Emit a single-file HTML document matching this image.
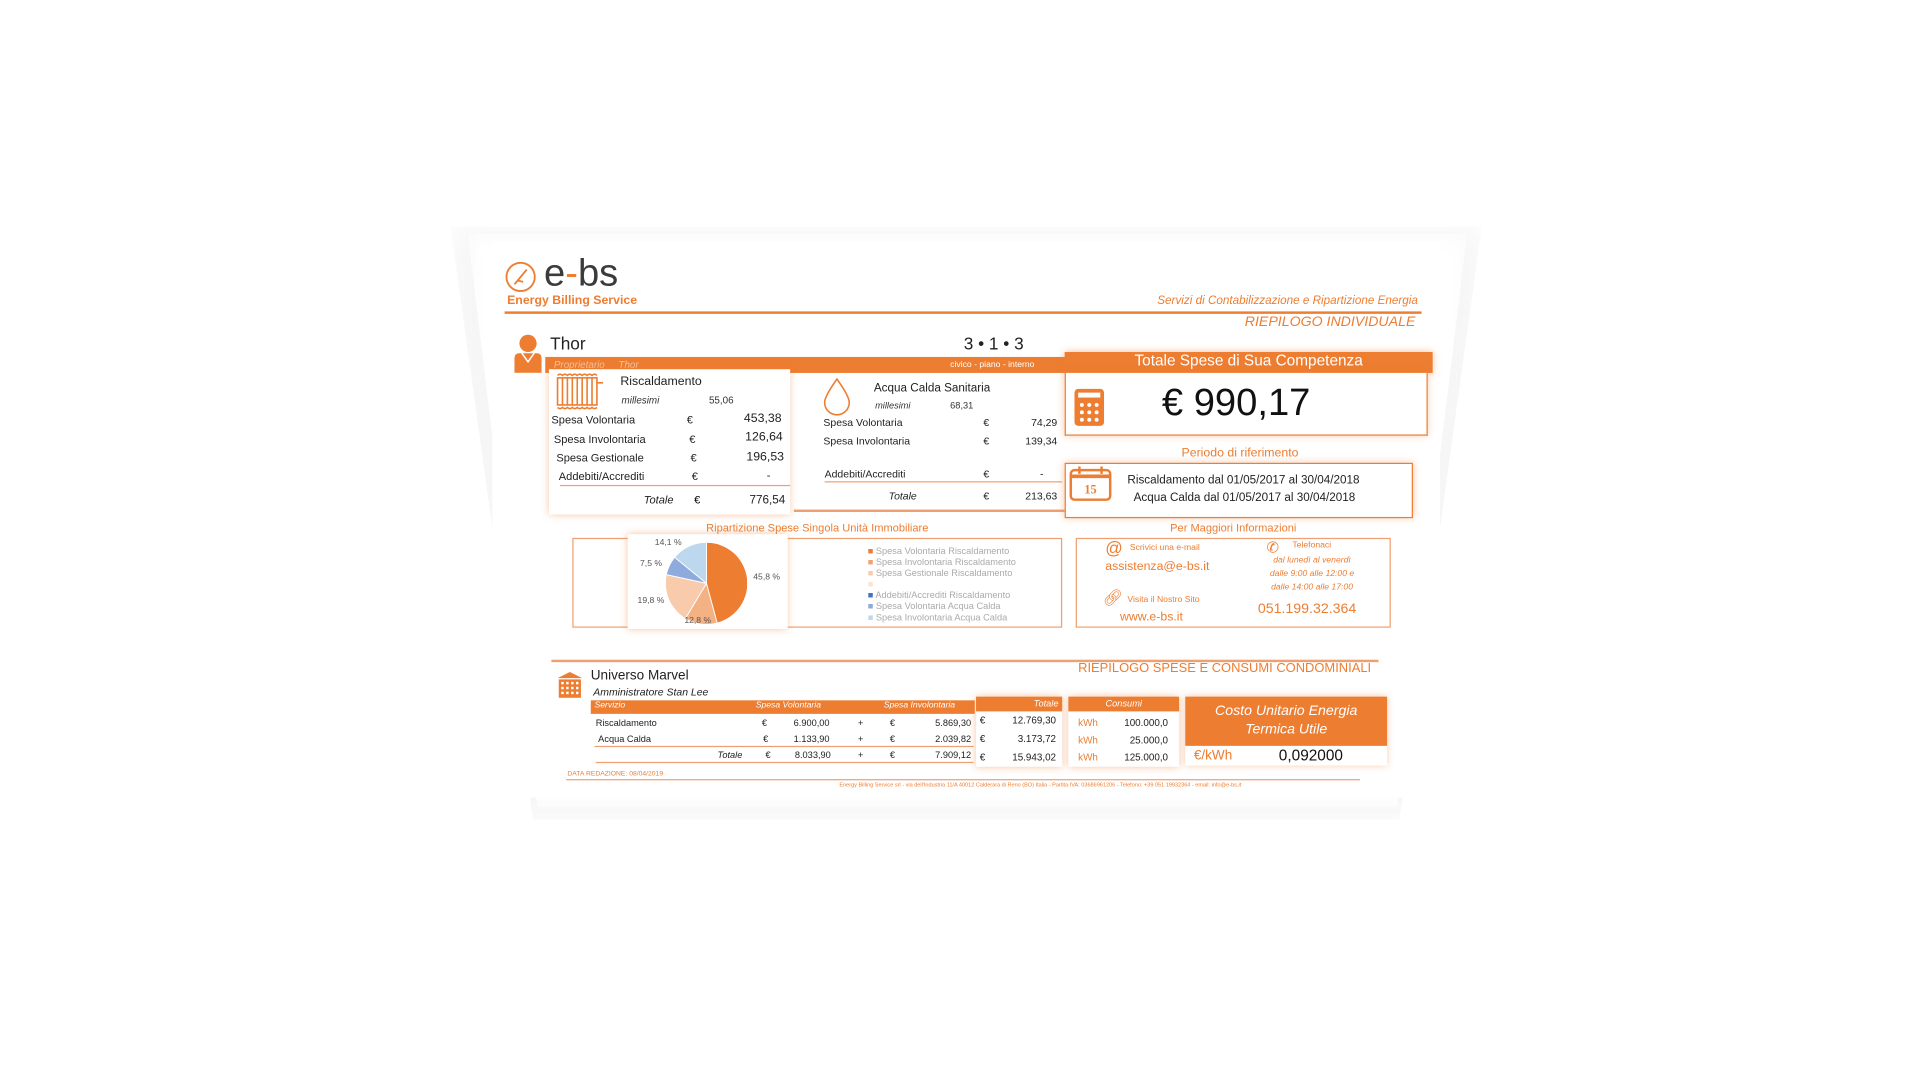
<!DOCTYPE html>
<html><head><meta charset="utf-8"><style>
html,body{margin:0;padding:0;background:#fff;width:1920px;height:1080px;overflow:hidden}
#s{position:absolute;left:0;top:0;width:1560px;height:878px;transform:scale(1.2308);transform-origin:0 0;font-family:"Liberation Sans",sans-serif}
.a{position:absolute;white-space:nowrap}
.o{color:#ed7d31}
.card{position:absolute;background:#fff;box-shadow:0 0 6px rgba(237,125,49,.45)}
.bx{position:absolute;border:1.5px solid #f0a070}
</style></head><body><div id="s">
<div class="a" style="left:366px;top:184px;width:838px;height:482px;background:#f6f6f6;clip-path:polygon(0 0,100% 0,92% 100%,8% 100%);filter:blur(12px)"></div>
<div class="a" style="left:380px;top:190px;width:812px;height:466px;background:#fff;clip-path:polygon(0 0,100% 0,93% 100%,7% 100%);filter:blur(8px)"></div>
<div class="a" style="left:400px;top:196px;width:770px;height:452px;background:#fff"></div>

<svg class="a" style="left:409px;top:211px" width="28" height="28" viewBox="0 0 28 28"><circle cx="14" cy="14" r="11.5" fill="none" stroke="#ed7d31" stroke-width="1.5"/><path d="M9 20 L19 8 M12 17 l4 1" stroke="#ed7d31" stroke-width="1.5" fill="none"/></svg>
<div class="a" style="left:442px;top:204px;font-size:31px;color:#3b3b3b">e<span class="o">-</span>bs</div>
<div class="a o" style="left:412px;top:239px;font-size:10px;font-weight:bold">Energy Billing Service</div>
<div class="a o" style="right:408px;top:239px;font-size:9.5px;font-style:italic">Servizi di Contabilizzazione e Ripartizione Energia</div>
<div class="a" style="left:410px;top:253px;width:745px;height:1.5px;background:#ed7d31"></div>
<div class="a o" style="right:410px;top:256px;font-size:11.5px;font-style:italic">RIEPILOGO INDIVIDUALE</div>

<svg class="a" style="left:417px;top:271px" width="26" height="32" viewBox="0 0 26 32"><circle cx="12" cy="8" r="7" fill="#ed7d31"/><path d="M1 32 V20 Q1 16 5 16 H19 Q23 16 23 20 V32Z" fill="#ed7d31"/><path d="M7 16 L12 23 L17 16" stroke="#fff" fill="none" stroke-width="1.2"/></svg>
<div class="a" style="left:447px;top:271px;font-size:14px;color:#222">Thor</div>
<div class="a" style="left:783px;top:271px;font-size:14px;color:#222">3 • 1 • 3</div>
<div class="a" style="left:443px;top:290px;width:424px;height:13px;background:#ed7d31"></div>
<div class="a" style="left:450px;top:292px;font-size:8px;font-style:italic;color:#f8c3a0">Proprietario &nbsp;&nbsp;&nbsp; Thor</div>
<div class="a" style="left:772px;top:293px;font-size:7px;color:#fff">civico - piano - interno</div>

<div class="card" style="left:446px;top:300px;width:196px;height:118px"></div>
<svg class="a" style="left:450px;top:303px" width="42" height="30" viewBox="0 0 42 30"><g stroke="#ed7d31" fill="none" stroke-width="1.3"><rect x="3" y="4" width="32" height="22"/><path d="M7 4v22M11 4v22M15 4v22M19 4v22M23 4v22M27 4v22M31 4v22M35 8h5"/><path d="M3 2q2-2 4 0q2-2 4 0q2-2 4 0q2-2 4 0q2-2 4 0q2-2 4 0q2-2 4 0q2-2 4 0M3 28q2 2 4 0q2 2 4 0q2 2 4 0q2 2 4 0q2 2 4 0q2 2 4 0q2 2 4 0q2 2 4 0"/></g></svg>
<div class="a" style="left:504px;top:305px;font-size:10px;color:#222">Riscaldamento</div>
<div class="a" style="left:505px;top:321px;font-size:8px;font-style:italic;color:#333">millesimi</div>
<div class="a" style="left:576px;top:321px;font-size:8px;color:#333">55,06</div>
<div style="font-size:9px;color:#222">
<div class="a" style="left:448px;top:336px">Spesa Volontaria</div><div class="a" style="left:558px;top:336px">€</div><div class="a" style="right:925px;top:335px;font-size:10px">453,38</div>
<div class="a" style="left:450px;top:352px">Spesa Involontaria</div><div class="a" style="left:560px;top:352px">€</div><div class="a" style="right:924px;top:350px;font-size:10px">126,64</div>
<div class="a" style="left:452px;top:367px">Spesa Gestionale</div><div class="a" style="left:561px;top:367px">€</div><div class="a" style="right:923px;top:366px;font-size:10px">196,53</div>
<div class="a" style="left:454px;top:382px">Addebiti/Accrediti</div><div class="a" style="left:562px;top:382px">€</div><div class="a" style="left:623px;top:381px">-</div>
</div>
<div class="a" style="left:455px;top:394px;width:187px;height:1px;background:#f0a070"></div>
<div class="a" style="left:523px;top:401px;font-size:9px;font-style:italic;color:#222">Totale</div><div class="a" style="left:564px;top:401px;font-size:9px">€</div><div class="a" style="right:922px;top:401px;font-size:9.5px;color:#222">776,54</div>

<svg class="a" style="left:666px;top:306px" width="28" height="32" viewBox="0 0 28 32"><path d="M14 2 Q24 16 24 21 A10 10 0 0 1 4 21 Q4 16 14 2Z" fill="none" stroke="#ed7d31" stroke-width="1.3"/></svg>
<div class="a" style="left:710px;top:310px;font-size:9.5px;color:#222">Acqua Calda Sanitaria</div>
<div class="a" style="left:711px;top:325px;font-size:7.5px;font-style:italic;color:#333">millesimi</div>
<div class="a" style="left:772px;top:325px;font-size:7.5px;color:#333">68,31</div>
<div style="font-size:8.5px;color:#222">
<div class="a" style="left:669px;top:338px">Spesa Volontaria</div><div class="a" style="left:799px;top:338px">€</div><div class="a" style="right:701px;top:338px">74,29</div>
<div class="a" style="left:669px;top:353px">Spesa Involontaria</div><div class="a" style="left:799px;top:353px">€</div><div class="a" style="right:701px;top:353px">139,34</div>
<div class="a" style="left:670px;top:380px">Addebiti/Accrediti</div><div class="a" style="left:799px;top:380px">€</div><div class="a" style="left:845px;top:380px">-</div>
<div class="a" style="left:722px;top:398px;font-style:italic">Totale</div><div class="a" style="left:799px;top:398px">€</div><div class="a" style="right:701px;top:398px">213,63</div>
</div>
<div class="a" style="left:670px;top:391px;width:193px;height:1px;background:#f0a070"></div>
<div class="a" style="left:645px;top:414px;width:220px;height:1.5px;background:#f0a070"></div>

<div class="a" style="left:865px;top:286px;width:299px;height:17px;background:#ed7d31;box-shadow:0 0 6px rgba(237,125,49,.5)"></div>
<div class="a" style="left:865px;top:286px;width:299px;text-align:center;font-size:12.5px;color:#fff">Totale Spese di Sua Competenza</div>
<div class="card" style="left:865px;top:303px;width:293px;height:50px;border:1.5px solid #ed7d31;border-top:none"></div>
<svg class="a" style="left:872px;top:315px" width="26" height="32" viewBox="0 0 26 32"><rect x="1" y="1" width="24" height="30" rx="3" fill="#ed7d31"/><rect x="4" y="4" width="18" height="4" fill="#fff"/><g fill="#fff"><circle cx="7" cy="14" r="1.6"/><circle cx="13" cy="14" r="1.6"/><circle cx="19" cy="14" r="1.6"/><circle cx="7" cy="20" r="1.6"/><circle cx="13" cy="20" r="1.6"/><circle cx="19" cy="20" r="1.6"/><circle cx="7" cy="26" r="1.6"/><circle cx="13" cy="26" r="1.6"/><circle cx="19" cy="26" r="1.6"/></g></svg>
<div class="a" style="left:944px;top:309px;font-size:31px;color:#111">€ 990,17</div>

<div class="a o" style="left:865px;top:363px;width:285px;text-align:center;font-size:10px">Periodo di riferimento</div>
<div class="card" style="left:865px;top:376px;width:281px;height:43px;border:1.5px solid #ed7d31"></div>
<svg class="a" style="left:868px;top:377px" width="38" height="32" viewBox="0 0 38 32"><rect x="2" y="5" width="32" height="24" rx="3" fill="#fff" stroke="#ed7d31" stroke-width="2"/><path d="M2 10h32" stroke="#ed7d31" stroke-width="3"/><path d="M9 2v6M27 2v6" stroke="#ed7d31" stroke-width="2"/><text x="18" y="24" font-size="10" font-weight="bold" fill="#ed7d31" text-anchor="middle" font-family="Liberation Serif">15</text></svg>
<div class="a" style="left:916px;top:385px;font-size:9.5px;color:#222">Riscaldamento dal 01/05/2017 al 30/04/2018</div>
<div class="a" style="left:921px;top:399px;font-size:9.5px;color:#222">Acqua Calda dal 01/05/2017 al 30/04/2018</div>

<div class="a o" style="left:464px;top:424px;width:400px;text-align:center;font-size:9px">Ripartizione Spese Singola Unità Immobiliare</div>
<div class="bx" style="left:465px;top:437px;width:396px;height:71px"></div>
<div class="card" style="left:510px;top:434px;width:130px;height:77px"></div>
<svg class="a" style="left:541px;top:441px" width="66" height="66" viewBox="-33 -33 66 66"><path d="M0 0L0 -33A33 33 0 0 1 8.6 31.9Z" fill="#ed7d31"/><path d="M0 0L8.6 31.9A33 33 0 0 1 -17 28.3Z" fill="#f4b183"/><path d="M0 0L-17 28.3A33 33 0 0 1 -32.3 -7Z" fill="#f8cbad"/><path d="M0 0L-32.3 -7A33 33 0 0 1 -25.6 -20.9Z" fill="#8faadc"/><path d="M0 0L-25.6 -20.9A33 33 0 0 1 0 -33Z" fill="#bdd7ee"/><g stroke="#fff" stroke-width="0.8"><path d="M0 0L0 -33M0 0L8.6 31.9M0 0L-17 28.3M0 0L-32.3 -7M0 0L-25.6 -20.9"/></g></svg>
<div style="font-size:7px;color:#555">
<div class="a" style="left:532px;top:438px">14,1 %</div>
<div class="a" style="left:520px;top:455px">7,5 %</div>
<div class="a" style="left:612px;top:466px">45,8 %</div>
<div class="a" style="left:518px;top:485px">19,8 %</div>
<div class="a" style="left:556px;top:501px">12,8 %</div>
</div>
<div style="font-size:7.5px;color:#aaa">
<div class="a" style="left:705px;top:443px"><span style="color:#ed7d31">■</span> Spesa Volontaria Riscaldamento</div>
<div class="a" style="left:705px;top:452px"><span style="color:#f4a070">■</span> Spesa Involontaria Riscaldamento</div>
<div class="a" style="left:705px;top:461px"><span style="color:#f8cbad">■</span> Spesa Gestionale Riscaldamento</div>
<div class="a" style="left:705px;top:470px"><span style="color:#fde4d2">■</span></div>
<div class="a" style="left:705px;top:479px"><span style="color:#4472c4">■</span> Addebiti/Accrediti Riscaldamento</div>
<div class="a" style="left:705px;top:488px"><span style="color:#8faadc">■</span> Spesa Volontaria Acqua Calda</div>
<div class="a" style="left:705px;top:497px"><span style="color:#bdd7ee">■</span> Spesa Involontaria Acqua Calda</div>
</div>

<div class="a o" style="left:874px;top:424px;width:256px;text-align:center;font-size:9px">Per Maggiori Informazioni</div>
<div class="bx" style="left:874px;top:437px;width:254px;height:71px"></div>
<div class="a o" style="left:898px;top:437px;font-size:14px">@</div>
<div class="a o" style="left:918px;top:442px;font-size:7px">Scrivici una e-mail</div>
<div class="a o" style="left:898px;top:455px;font-size:10px">assistenza@e-bs.it</div>
<div class="a o" style="left:896px;top:478px;font-size:13px">&#128279;&#xFE0E;</div>
<div class="a o" style="left:916px;top:484px;font-size:7px">Visita il Nostro Sito</div>
<div class="a o" style="left:910px;top:496px;font-size:10px">www.e-bs.it</div>
<div class="a o" style="left:1029px;top:438px;font-size:12px">&#9990;</div>
<div class="a o" style="left:1050px;top:440px;font-size:7px">Telefonaci</div>
<div class="a o" style="left:1021px;top:450px;width:90px;text-align:center;font-size:7px;line-height:11px;font-style:italic">dal lunedì al venerdì<br>dalle 9:00 alle 12:00 e<br>dalle 14:00 alle 17:00</div>
<div class="a o" style="left:1022px;top:489px;font-size:11.5px">051.199.32.364</div>

<div class="a" style="left:448px;top:536px;width:672px;height:1.5px;background:#f0a070"></div>
<div class="a o" style="right:446px;top:537px;font-size:10.5px">RIEPILOGO SPESE E CONSUMI CONDOMINIALI</div>
<svg class="a" style="left:452px;top:545px" width="22" height="22" viewBox="0 0 22 22"><path d="M1 6 L11 1 L21 6Z" fill="#ed7d31"/><rect x="2" y="7" width="18" height="15" fill="#ed7d31"/><g fill="#fff"><rect x="4" y="9" width="2" height="2"/><rect x="8" y="9" width="2" height="2"/><rect x="12" y="9" width="2" height="2"/><rect x="16" y="9" width="2" height="2"/><rect x="4" y="13" width="2" height="2"/><rect x="8" y="13" width="2" height="2"/><rect x="12" y="13" width="2" height="2"/><rect x="16" y="13" width="2" height="2"/><rect x="4" y="17" width="2" height="2"/><rect x="8" y="17" width="2" height="2"/><rect x="12" y="17" width="2" height="2"/><rect x="16" y="17" width="2" height="2"/></g></svg>
<div class="a" style="left:480px;top:543px;font-size:11px;color:#222">Universo Marvel</div>
<div class="a" style="left:482px;top:557px;font-size:8.5px;font-style:italic;color:#222">Amministratore Stan Lee</div>

<div class="a" style="left:480px;top:569px;width:312px;height:11px;background:#ed7d31"></div>
<div style="font-size:7px;color:#fff;font-style:italic">
<div class="a" style="left:483px;top:570px">Servizio</div>
<div class="a" style="left:614px;top:570px">Spesa Volontaria</div>
<div class="a" style="left:718px;top:570px">Spesa Involontaria</div>
</div>
<div style="font-size:7.5px;color:#222">
<div class="a" style="left:484px;top:583px">Riscaldamento</div>
<div class="a" style="left:619px;top:583px">€</div><div class="a" style="right:886px;top:583px">6.900,00</div><div class="a" style="left:697px;top:583px">+</div><div class="a" style="left:723px;top:583px">€</div><div class="a" style="right:771px;top:583px">5.869,30</div>
<div class="a" style="left:486px;top:596px">Acqua Calda</div>
<div class="a" style="left:620px;top:596px">€</div><div class="a" style="right:886px;top:596px">1.133,90</div><div class="a" style="left:697px;top:596px">+</div><div class="a" style="left:723px;top:596px">€</div><div class="a" style="right:771px;top:596px">2.039,82</div>
<div class="a" style="left:583px;top:609px;font-style:italic">Totale</div>
<div class="a" style="left:622px;top:609px">€</div><div class="a" style="right:885px;top:609px">8.033,90</div><div class="a" style="left:697px;top:609px">+</div><div class="a" style="left:723px;top:609px">€</div><div class="a" style="right:771px;top:609px">7.909,12</div>
</div>
<div class="a" style="left:483px;top:606px;width:308px;height:1px;background:#f0a070"></div>
<div class="a" style="left:484px;top:619px;width:307px;height:1px;background:#f0a070"></div>

<div class="card" style="left:793px;top:566px;width:70px;height:57px"></div>
<div class="a" style="left:793px;top:566px;width:70px;height:12px;background:#ed7d31"></div>
<div class="a" style="right:700px;top:567px;font-size:7.5px;color:#fff;font-style:italic">Totale</div>
<div style="font-size:8px;color:#222">
<div class="a" style="left:796px;top:581px">€</div><div class="a" style="right:702px;top:581px">12.769,30</div>
<div class="a" style="left:796px;top:596px">€</div><div class="a" style="right:702px;top:596px">3.173,72</div>
<div class="a" style="left:796px;top:611px">€</div><div class="a" style="right:702px;top:611px">15.943,02</div>
</div>
<div class="card" style="left:868px;top:566px;width:90px;height:57px"></div>
<div class="a" style="left:868px;top:566px;width:90px;height:12px;background:#ed7d31"></div>
<div class="a" style="left:868px;top:567px;width:90px;text-align:center;font-size:7.5px;color:#fff;font-style:italic">Consumi</div>
<div style="font-size:8px;color:#222">
<div class="a o" style="left:876px;top:583px">kWh</div><div class="a" style="right:611px;top:583px">100.000,0</div>
<div class="a o" style="left:876px;top:597px">kWh</div><div class="a" style="right:611px;top:597px">25.000,0</div>
<div class="a o" style="left:876px;top:611px">kWh</div><div class="a" style="right:611px;top:611px">125.000,0</div>
</div>
<div class="card" style="left:963px;top:566px;width:164px;height:56px"></div>
<div class="a" style="left:963px;top:566px;width:164px;height:40px;background:#ed7d31"></div>
<div class="a" style="left:963px;top:571px;width:164px;text-align:center;font-size:11.5px;line-height:15px;color:#fff;font-style:italic">Costo Unitario Energia<br>Termica Utile</div>
<div class="a o" style="left:970px;top:608px;font-size:11px">€/kWh</div>
<div class="a" style="left:1039px;top:607px;font-size:12.5px;color:#111">0,092000</div>

<div class="a o" style="left:461px;top:626px;font-size:5.5px">DATA REDAZIONE: 08/04/2019</div>
<div class="a" style="left:460px;top:633px;width:645px;height:1.2px;background:#f0a070"></div>
<div class="a o" style="left:682px;top:635px;font-size:4.5px">Energy Billing Service srl - via dell'Industria 11/A 40012 Calderara di Reno (BO) Italia - Partita IVA: 03686961206 - Telefono: +39 051 19932364 - email: info@e-bs.it</div>
</div></body></html>
